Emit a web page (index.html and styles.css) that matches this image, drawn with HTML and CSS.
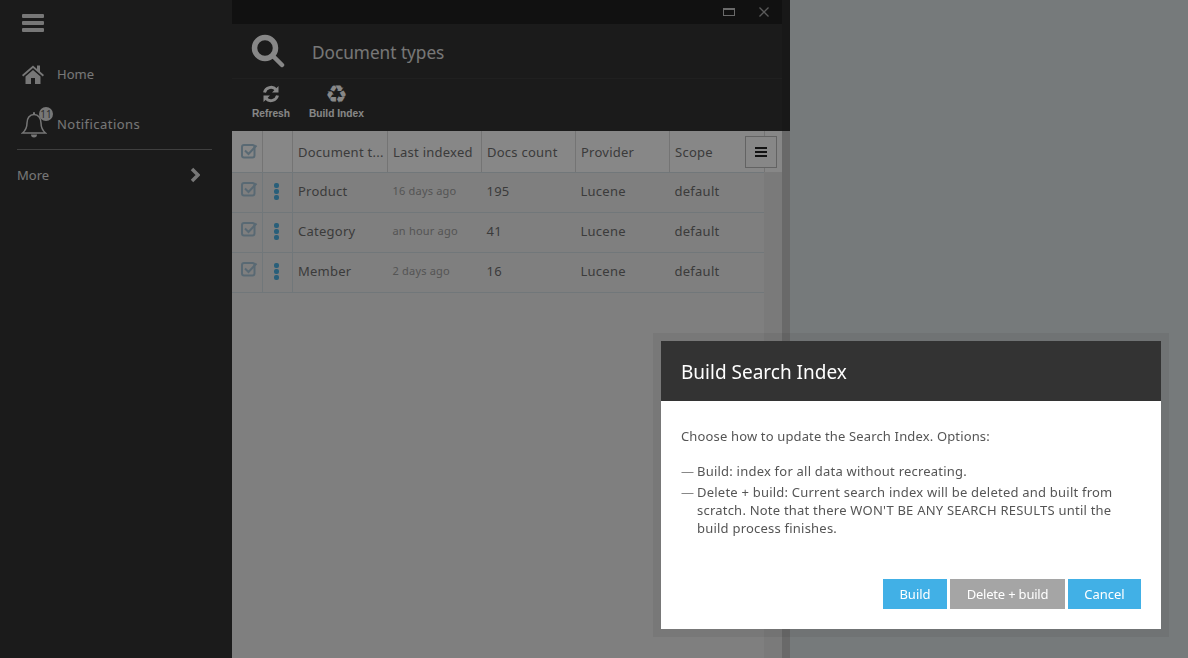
FILE: index.html
```html
<!DOCTYPE html>
<html>
<head>
  <meta charset="UTF-8">
  <title>Document types</title>
  <link rel="stylesheet" href="styles.css">
</head>
<body>
  <div class="app">
    <div class="sidebar">
      <div class="burger"><span></span><span></span><span></span></div>
      <div class="navItem">
        <svg class="navIcon" width="22" height="20" viewBox="0 0 22 20"><path d="M11 1.500 0 11l1.200 1.400L11 4l9.800 8.400L22 11l-4-3.500V1.500h-3v3.400zM3.500 12.500V20h5.500v-6h4v6h5.500v-7.500L11 6z"/></svg>
        <span>Home</span>
      </div>
      <div class="navItem">
        <svg class="bellIcon" width="26" height="28" viewBox="0 0 26 28"><path class="bellLine" d="M1.500 23c3-2.500 4.500-5.500 4.500-10 0-4.500 2.500-8.500 7-8.500s7 4 7 8.500c0 4.500 1.500 7.500 4.500 10z"/><path d="M10 24.500h6a3 3 0 0 1-6 0zM12 3a1 1 0 0 1 2 0v2h-2z"/></svg>
        <span class="badge">11</span>
        <span class="wideText">Notifications</span>
      </div>
      <div class="more">
        <span>More</span>
        <svg width="10" height="16" viewBox="0 0 10 16"><path class="chev" d="M2 2l6 6-6 6"/></svg>
      </div>
    </div>

    <div class="blade">
      <div class="bladeTop">
        <div class="titleBar">
          <span class="maxIcon"></span>
          <svg width="10" height="10" viewBox="0 0 10 10"><path class="closeIcon" d="M.5.500l9 9M9.500.500l-9 9"/></svg>
        </div>
        <div class="bladeHead">
          <svg width="34" height="34" viewBox="0 0 34 34"><circle class="lens" cx="14" cy="14" r="10.500"/><path class="lens handle" d="M22 22l9 9"/></svg>
          <h1>Document types</h1>
        </div>
        <div class="toolbar">
          <div class="tool">
            <svg width="18" height="18" viewBox="0 0 18 18"><path class="arc" d="M2.500 7.500A6.800 6.800 0 0 1 14 4.500"/><path class="arc" d="M15.500 10.500A6.800 6.800 0 0 1 4 13.500"/><path class="arrow" d="M16.500 1v6.500H10zM1.500 17v-6.500H8z"/></svg>
            <span>Refresh</span>
          </div>
          <div class="tool">
            <span class="recycle">&#9851;</span>
            <span>Build Index</span>
          </div>
        </div>
      </div>
      <div class="bladeBody">
        <div class="tableWrap">
          <table>
            <tr class="headRow">
              <th class="colCheck"><svg class="check" width="18" height="16" viewBox="0 0 18 16"><rect x="1" y="2" width="12.500" height="12.500" rx="2"/><path d="M4 7.500l3.500 3.500 8-8.500"/></svg></th>
              <th class="colDots"></th>
              <th class="colName">Document t...</th>
              <th class="colDate">Last indexed</th>
              <th class="colDocs">Docs count</th>
              <th class="colProv">Provider</th>
              <th>Scope</th>
            </tr>
            <tr>
              <td><svg class="check" width="18" height="16" viewBox="0 0 18 16"><rect x="1" y="2" width="12.500" height="12.500" rx="2"/><path d="M4 7.500l3.500 3.500 8-8.500"/></svg></td>
              <td><span class="dots"><i></i><i></i><i></i></span></td>
              <td>Product</td>
              <td class="ago">16 days ago</td>
              <td>195</td>
              <td>Lucene</td>
              <td>default</td>
            </tr>
            <tr>
              <td><svg class="check" width="18" height="16" viewBox="0 0 18 16"><rect x="1" y="2" width="12.500" height="12.500" rx="2"/><path d="M4 7.500l3.500 3.500 8-8.500"/></svg></td>
              <td><span class="dots"><i></i><i></i><i></i></span></td>
              <td>Category</td>
              <td class="ago">an hour ago</td>
              <td>41</td>
              <td>Lucene</td>
              <td>default</td>
            </tr>
            <tr>
              <td><svg class="check" width="18" height="16" viewBox="0 0 18 16"><rect x="1" y="2" width="12.500" height="12.500" rx="2"/><path d="M4 7.500l3.500 3.500 8-8.500"/></svg></td>
              <td><span class="dots"><i></i><i></i><i></i></span></td>
              <td>Member</td>
              <td class="ago">2 days ago</td>
              <td>16</td>
              <td>Lucene</td>
              <td>default</td>
            </tr>
          </table>
          <div class="scrollCol"><div class="scrollHead"></div></div>
          <div class="colMenu"><span></span><span></span><span></span></div>
        </div>
      </div>
    </div>
  </div>

  <div class="overlay"></div>

  <div class="dialog">
    <div class="dialogHead">Build Search Index</div>
    <div class="dialogBody">
      <p>Choose how to update the Search Index. Options:</p>
      <ul>
        <li>Build: index for all data without recreating.</li>
        <li>Delete + build: Current search index will be deleted and built from scratch. Note that there WON'T BE ANY SEARCH RESULTS until the build process finishes.</li>
      </ul>
    </div>
    <div class="dialogButtons">
      <button class="primary btnBuild">Build</button>
      <button class="muted">Delete + build</button>
      <button class="primary btnCancel">Cancel</button>
    </div>
  </div>
</body>
</html>
```
FILE: styles.css
```css
html, body {
  margin: 0;
  height: 100%;
  overflow: hidden;
}
body {
  font-family: "Noto Sans", "Open Sans", sans-serif;
  font-size: 13px;
  color: #707070;
  background-color: #dfe6e8;
}
.app {
  display: flex;
  height: 658px;
}

/* sidebar */
.sidebar {
  width: 232px;
  flex: none;
  box-sizing: border-box;
  background-color: #333;
  color: #e0e0e0;
}
.burger {
  display: flex;
  flex-direction: column;
  gap: 3px;
  width: 22px;
  margin: 14px 0 0 22px;
}
.burger span {
  height: 4px;
  border-radius: 1px;
  background-color: #e0e0e0;
}
.navItem {
  display: flex;
  align-items: center;
  gap: 13px;
  height: 50px;
  padding-left: 22px;
  position: relative;
}
.burger + .navItem {
  margin-top: 17px;
}
.navIcon {
  flex: none;
  fill: #e0e0e0;
}
.bellIcon {
  flex: none;
  fill: #e0e0e0;
  margin: 0 -3px 0 -1px;
}
.bellLine {
  fill: none;
  stroke: #e0e0e0;
  stroke-width: 1.500;
}
.wideText {
  letter-spacing: 0.45px;
}
.badge {
  position: absolute;
  left: 39px;
  top: 8px;
  width: 14px;
  height: 14px;
  border-radius: 50%;
  background-color: #e0e0e0;
  color: #555;
  font-size: 10px;
  line-height: 14px;
  text-align: center;
}
.more {
  display: flex;
  align-items: center;
  justify-content: space-between;
  margin: 0 20px 0 17px;
  height: 50px;
  border-top: 1px solid #777;
  padding-right: 12px;
}
.chev {
  fill: none;
  stroke: #e0e0e0;
  stroke-width: 3.500;
}

/* blade */
.blade {
  width: 558px;
  flex: none;
  display: flex;
  flex-direction: column;
}
.bladeTop {
  height: 131px;
  background-color: #333;
  border-right: 8px solid #2e2e2e;
  color: #e0e0e0;
}
.titleBar {
  height: 24px;
  background-color: #202020;
  display: flex;
  align-items: center;
  justify-content: flex-end;
  gap: 24px;
  padding-right: 13px;
}
.maxIcon {
  width: 10px;
  height: 5px;
  border: 1px solid #c8c8c8;
  border-top-width: 2px;
}
.closeIcon {
  fill: none;
  stroke: #aaa;
  stroke-width: 1.300;
}
.bladeHead {
  display: flex;
  align-items: center;
  gap: 27px;
  height: 54px;
  padding-left: 19px;
  border-bottom: 1px solid #3d3d3d;
}
h1 {
  margin: 3px 0 0;
  font-size: 17.200px;
  font-weight: normal;
}
.lens {
  fill: none;
  stroke: #fff;
  stroke-width: 5.500;
}
.handle {
  stroke-linecap: round;
  stroke-width: 4.500;
}
.toolbar {
  display: flex;
  padding: 6px 0 0 18px;
  gap: 15px;
  color: #fff;
  font-family: "Liberation Sans", Arial, sans-serif;
  font-size: 10.200px;
  font-weight: bold;
}
.tool {
  display: flex;
  flex-direction: column;
  align-items: center;
  height: 34px;
  justify-content: space-between;
  padding: 0 2px;
}
.arc {
  fill: none;
  stroke: #fff;
  stroke-width: 3;
}
.arrow {
  fill: #fff;
}
.recycle {
  font-family: "DejaVu Sans", sans-serif;
  font-size: 25px;
  line-height: 20px;
  font-weight: normal;
}
.bladeBody {
  flex: 1;
  display: flex;
  background-color: #c6c6c6;
  padding-right: 8px;
}
.tableWrap {
  flex: 1;
  display: flex;
  align-items: stretch;
  background-color: #f0f0f0;
  position: relative;
}
table {
  border-collapse: collapse;
  table-layout: fixed;
  width: 532px;
  height: 161px;
  flex: none;
  letter-spacing: 0.25px;
}
th, td {
  padding: 0 0 0 5px;
  font-weight: normal;
  text-align: left;
  border-bottom: 1px solid #d5e0e7;
}
td {
  height: 35px;
  padding-bottom: 4px;
}
th {
  height: 41px;
  background-color: #fff;
  border-left: 1px solid #dcdcdc;
  border-bottom-color: #d5e0e7;
}
td:nth-child(2), td:nth-child(3) {
  border-left: 1px solid #d5e0e7;
}
th:first-child {
  border-left: 0;
}
.colCheck { width: 25px; }
.colDots { width: 24px; }
.colName { width: 89px; }
.colDate { width: 88px; }
.colDocs { width: 88px; }
.colProv { width: 88px; }
td.ago {
  font-size: 11px;
  letter-spacing: 0.2px;
  color: #a0a0a0;
}
.check {
  display: block;
  margin: -2px 0 0 4px;
  fill: none;
  stroke: #a8c6da;
  stroke-width: 2;
}
td .check {
  margin-top: -3px;
}
.dots {
  display: flex;
  flex-direction: column;
  gap: 1px;
  margin: 1px 0 0 6px;
  width: 5px;
}
.dots i {
  width: 5px;
  height: 5px;
  border-radius: 2px;
  background-color: #4fb4e6;
}
.scrollCol {
  flex: none;
  width: 18px;
  background-color: #e6e6e6;
}
.scrollHead {
  height: 41px;
  background-color: #fff;
  border-left: 1px solid #dcdcdc;
  box-sizing: border-box;
}
.colMenu {
  position: absolute;
  top: 5px;
  left: 513px;
  width: 30px;
  height: 30px;
  border: 1px solid #bbb;
  background-color: #fff;
  display: flex;
  flex-direction: column;
  justify-content: center;
  align-items: center;
  gap: 2px;
}
.colMenu span {
  width: 12px;
  height: 2px;
  background-color: #222;
}

.overlay {
  position: fixed;
  top: 0;
  right: 0;
  bottom: 0;
  left: 0;
  background-color: rgba(0, 0, 0, 0.47);
}

/* dialog */
.dialog {
  position: fixed;
  left: 661px;
  top: 341px;
  width: 500px;
  height: 288px;
  background-color: #fff;
  box-shadow: 0 0 0 8px rgba(0, 0, 0, 0.06);
  display: flex;
  flex-direction: column;
}
.dialogHead {
  height: 60px;
  line-height: 62px;
  padding-left: 20px;
  background-color: #333;
  color: #fff;
  font-size: 19px;
}
.dialogBody {
  flex: 1;
  padding: 0 20px;
  color: #555;
  line-height: 18px;
  letter-spacing: 0.15px;
}
.dialogBody p {
  margin: 26px 0 17px;
}
.dialogBody ul {
  margin: 0;
  padding: 0;
  list-style: none;
  letter-spacing: 0.22px;
}
.dialogBody li {
  position: relative;
  padding-left: 16px;
  margin-bottom: 3px;
}
.dialogBody li:before {
  content: "\2014";
  position: absolute;
  left: 0;
  color: #888;
}
.dialogButtons {
  display: flex;
  justify-content: flex-end;
  gap: 3px;
  padding: 0 20px 20px;
}
button {
  height: 30px;
  border: 0;
  padding: 0;
  color: #fff;
  font-family: inherit;
  font-size: 13px;
}
.primary { background-color: #41b0e6; }
.muted { background-color: #a5a5a5; width: 115px; letter-spacing: -0.2px; }
.btnBuild { width: 64px; }
.btnCancel { width: 73px; }
```
